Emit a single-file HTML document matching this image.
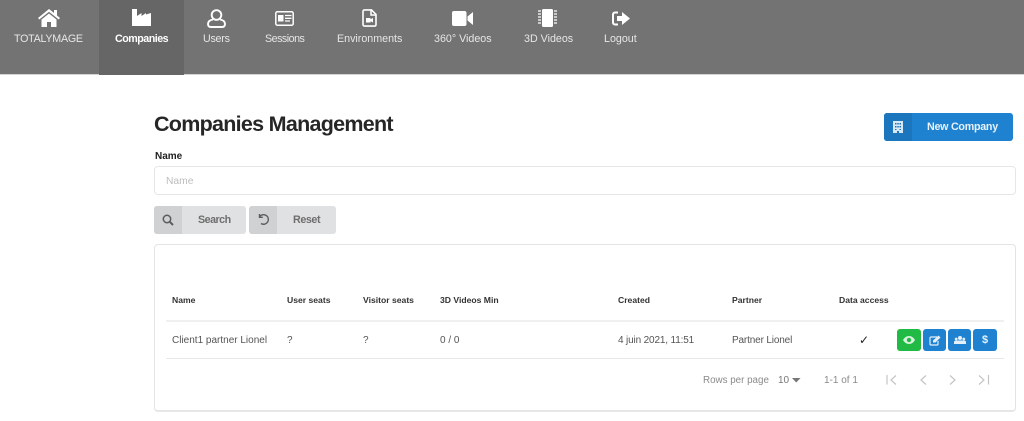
<!DOCTYPE html>
<html><head><meta charset="utf-8"><style>
*{box-sizing:border-box}
html,body{margin:0;padding:0;width:1024px;height:421px;overflow:hidden;background:#fff;font-family:"Liberation Sans",sans-serif;color:#333}
.a{position:absolute;white-space:nowrap}
.nav{left:0;top:0;width:1024px;height:74px;background:#737373}
.nt{top:31.500px;font-size:10.700px;line-height:14px;color:#e6e6e6}
.th{top:294px;font-size:8.600px;line-height:12px;font-weight:bold;color:#333}
.td{top:334px;font-size:10px;line-height:13px;color:#555}
.ab{top:329px;height:22px;border-radius:3px;background:#1f82d0}
svg{position:absolute;display:block}
</style></head><body>
<div class="a nav"></div>
<div class="a" style="left:0;top:74px;width:1024px;height:1px;background:#d4d4d4"></div>
<div class="a" style="left:99px;top:0;width:85px;height:75px;background:#666"></div>
<svg style="left:38px;top:9px" width="22" height="18" viewBox="0 0 22 18"><path d="M11 0L0 9l1.300 1.500L11 2.800l9.700 7.700L22 9l-3-2.500V1h-3v3z" fill="#fff"/><path d="M11 4.500L3.500 10.500V18H9v-5h4v5h5.500v-7.500z" fill="#fff"/></svg>
<div class="a nt" style="left:14px;letter-spacing:-.25px">TOTALYMAGE</div>
<svg style="left:132px;top:9px" width="19" height="17" viewBox="0 0 19 17"><path d="M0 0h5v7l4.500-3v3l4.500-3v1.500L19 4v13H0z" fill="#fff"/></svg>
<div class="a nt" style="left:115px;font-weight:bold;color:#fff;letter-spacing:-.5px">Companies</div>
<svg style="left:207px;top:9px" width="19" height="19" viewBox="0 0 19 19" fill="none" stroke="#fff" stroke-width="1.900"><circle cx="9.500" cy="6" r="4.800"/><path d="M6 10.500C3 11 1 12.500 1 15c0 2 1 3 3 3h11c2 0 3-1 3-3 0-2.500-2-4-5-4.500"/></svg>
<div class="a nt" style="left:203px;letter-spacing:-.25px">Users</div>
<svg style="left:275px;top:11px" width="19" height="15" viewBox="0 0 19 15"><rect x=".8" y=".8" width="17.400" height="13.400" rx="1.500" fill="none" stroke="#fff" stroke-width="1.500"/><rect x="3" y="4" width="5.500" height="6.500" fill="#fff"/><path d="M10 4.500h6.500M10 7.300h6.500M10 10h5" stroke="#fff" stroke-width="1.300"/></svg>
<div class="a nt" style="left:265px;letter-spacing:-.5px">Sessions</div>
<svg style="left:362px;top:9px" width="15" height="18" viewBox="0 0 15 18"><path d="M2.500 .9h7L14 5.400V15.500c0 .9-.6 1.600-1.500 1.600h-10C1.600 17.100 1 16.400 1 15.500V2.500C1 1.600 1.600.9 2.500 .9z" fill="none" stroke="#fff" stroke-width="1.600"/><path d="M9 1v5h5" fill="none" stroke="#fff" stroke-width="1.500"/><path d="M4 9h4.500v1.300l2.500-1.300v4.500l-2.500-1.300V13.500H4z" fill="#fff"/></svg>
<div class="a nt" style="left:337px">Environments</div>
<svg style="left:452px;top:11px" width="21" height="15" viewBox="0 0 21 15"><rect x="0" y="0" width="14.500" height="15" rx="2" fill="#fff"/><path d="M15.500 5.500L21 1v13l-5.500-4.500z" fill="#fff"/></svg>
<div class="a nt" style="left:434px">360° Videos</div>
<svg style="left:538px;top:9px" width="19" height="18" viewBox="0 0 19 18"><rect x="4" y="0" width="11" height="18" rx="1.500" fill="#fff"/><path d="M0 2h3M0 5h3M0 8h3M0 11h3M0 14h3M16 2h3M16 5h3M16 8h3M16 11h3M16 14h3" stroke="#fff" stroke-width="1.300"/></svg>
<div class="a nt" style="left:524px">3D Videos</div>
<svg style="left:612px;top:11px" width="18" height="15" viewBox="0 0 18 15"><path d="M6 1.500H3C1.800 1.500 1 2.300 1 3.500v8c0 1.200.8 2 2 2h3" fill="none" stroke="#fff" stroke-width="2"/><path d="M5 5h5V1l8 6.500L10 14v-4H5z" fill="#fff"/></svg>
<div class="a nt" style="left:604px">Logout</div>

<div class="a" style="left:154px;top:109px;font-size:21.500px;line-height:30px;color:#262626;font-weight:bold;letter-spacing:-.72px">Companies Management</div>
<div class="a" style="left:884px;top:113px;width:129px;height:28px;border-radius:3px;background:#1f82d0"></div>
<div class="a" style="left:884px;top:113px;width:28px;height:28px;border-radius:3px 0 0 3px;background:#1c76bd"></div>
<svg style="left:893px;top:121px" width="10" height="12" viewBox="0 0 10 12"><path fill="#d8e8f5" fill-rule="evenodd" d="M0 0h10v12H6V10H4v2H0zM2 2v1.500h1.500V2zM4.300 2v1.500h1.500V2zM6.500 2v1.500H8V2zM2 5v1.500h1.500V5zM4.300 5v1.500h1.500V5zM6.500 5v1.500H8V5zM2 8v1h1.500V8zM6.500 8v1H8V8z"/></svg>
<div class="a" style="left:927px;top:120.500px;font-size:10.700px;letter-spacing:-.25px;line-height:13px;font-weight:bold;color:#e8f2fa">New Company</div>

<div class="a" style="left:155px;top:150px;font-size:10px;line-height:13px;font-weight:bold;color:#222">Name</div>
<div class="a" style="left:154px;top:166px;width:862px;height:29px;border:1px solid #e6e6e6;border-radius:4px;background:#fff"></div>
<div class="a" style="left:166px;top:175px;font-size:10.300px;line-height:13px;color:#bdbdbd">Name</div>

<div class="a" style="left:154px;top:206px;width:92px;height:28px;border-radius:3px;background:#e0e1e2"></div>
<div class="a" style="left:154px;top:206px;width:28px;height:28px;border-radius:3px 0 0 3px;background:#d0d1d2"></div>
<svg style="left:162px;top:214px" width="12" height="12" viewBox="0 0 12 12" fill="none" stroke="#5c5c5c"><circle cx="5" cy="5" r="3.700" stroke-width="1.500"/><path d="M7.800 7.800L11 11" stroke-width="2"/></svg>
<div class="a" style="left:198px;top:213.500px;font-size:10.700px;letter-spacing:-.5px;line-height:13px;font-weight:bold;color:#6e6e6e">Search</div>
<div class="a" style="left:249px;top:206px;width:87px;height:28px;border-radius:3px;background:#e0e1e2"></div>
<div class="a" style="left:249px;top:206px;width:28px;height:28px;border-radius:3px 0 0 3px;background:#d0d1d2"></div>
<svg style="left:258px;top:213px" width="12" height="13" viewBox="0 0 12 13" fill="none" stroke="#5c5c5c" stroke-width="1.400"><path d="M1.800 3.500A4.800 4.800 0 1 1 3 10.500"/><path d="M1.500 1v3.300h3.300"/></svg>
<div class="a" style="left:293px;top:213.500px;font-size:10.700px;letter-spacing:-.4px;line-height:13px;font-weight:bold;color:#6e6e6e">Reset</div>

<div class="a" style="left:154px;top:244px;width:862px;height:168px;border:1px solid #e4e4e4;border-bottom:2px solid #e6e6e6;border-radius:4px;background:#fff"></div>
<div class="a th" style="left:172px">Name</div>
<div class="a th" style="left:287px">User seats</div>
<div class="a th" style="left:363px">Visitor seats</div>
<div class="a th" style="left:440px">3D Videos Min</div>
<div class="a th" style="left:618px">Created</div>
<div class="a th" style="left:732px">Partner</div>
<div class="a th" style="left:839px">Data access</div>
<div class="a" style="left:166px;top:320px;width:838px;height:2px;background:#f0f0f0"></div>
<div class="a" style="left:166px;top:358px;width:838px;height:1px;background:#e8e8e8"></div>
<div class="a td" style="left:172px">Client1 partner Lionel</div>
<div class="a td" style="left:287px">?</div>
<div class="a td" style="left:363px">?</div>
<div class="a td" style="left:440px">0 / 0</div>
<div class="a td" style="left:618px;letter-spacing:-.15px">4 juin 2021, 11:51</div>
<div class="a td" style="left:732px;letter-spacing:-.15px">Partner Lionel</div>
<div class="a" style="left:859px;top:333px;font-size:12px;line-height:14px;color:#222;font-family:'DejaVu Sans',sans-serif">✓</div>

<div class="a ab" style="left:897px;width:24px;background:#21ba45"></div>
<svg style="left:903px;top:336px" width="12" height="8" viewBox="0 0 12 8"><path fill-rule="evenodd" fill="#d9f3df" d="M0 4C1.500 1.500 3.500 0 6 0s4.500 1.500 6 4c-1.500 2.500-3.500 4-6 4S1.500 6.500 0 4zM6 1.800a2.200 2.200 0 1 0 0 4.400 2.200 2.200 0 0 0 0-4.400z"/></svg>
<div class="a ab" style="left:923px;width:23px"></div>
<svg style="left:929px;top:335px" width="12" height="11" viewBox="0 0 12 11"><path d="M8 2H2a1 1 0 0 0-1 1v6a1 1 0 0 0 1 1h6a1 1 0 0 0 1-1V6" fill="none" stroke="#e3f0fa" stroke-width="1.200"/><path d="M4 5.500L9.500.5l2 2L6.500 7.500H4z" fill="#e3f0fa"/></svg>
<div class="a ab" style="left:948px;width:23px"></div>
<svg style="left:954px;top:336px" width="12" height="8" viewBox="0 0 12 8"><circle cx="6" cy="2" r="2" fill="#e3f0fa"/><circle cx="2.200" cy="3" r="1.400" fill="#e3f0fa"/><circle cx="9.800" cy="3" r="1.400" fill="#e3f0fa"/><path d="M0 8V6c0-1 1-1.500 2-1.500h8c1 0 2 .5 2 1.500v2z" fill="#e3f0fa"/></svg>
<div class="a ab" style="left:973px;width:24px"></div>
<div class="a" style="left:982px;top:334px;font-size:11px;line-height:13px;font-weight:bold;color:#e3f0fa">$</div>

<div class="a" style="left:703px;top:374px;font-size:9.800px;line-height:13px;color:#8a8a8a">Rows per page</div>
<div class="a" style="left:778px;top:374px;font-size:10px;line-height:13px;color:#777">10</div>
<svg style="left:792px;top:378px" width="9" height="5" viewBox="0 0 9 5"><path d="M0 0h8.500L4.250 4.500z" fill="#777"/></svg>
<div class="a" style="left:824px;top:374px;font-size:10px;line-height:13px;color:#8a8a8a">1-1 of 1</div>
<svg style="left:886px;top:374px" width="104" height="12" viewBox="0 0 104 12" fill="none" stroke="#c4c4c4" stroke-width="1.200"><path d="M1 1v9.500M10 1.500L5 6l5 4.500"/><path d="M40 1.500L35 6l5 4.500"/><path d="M64 1.500L69 6l-5 4.500"/><path d="M93 1.500L98 6l-5 4.500M102.500 1v9.500"/></svg>
</body></html>
